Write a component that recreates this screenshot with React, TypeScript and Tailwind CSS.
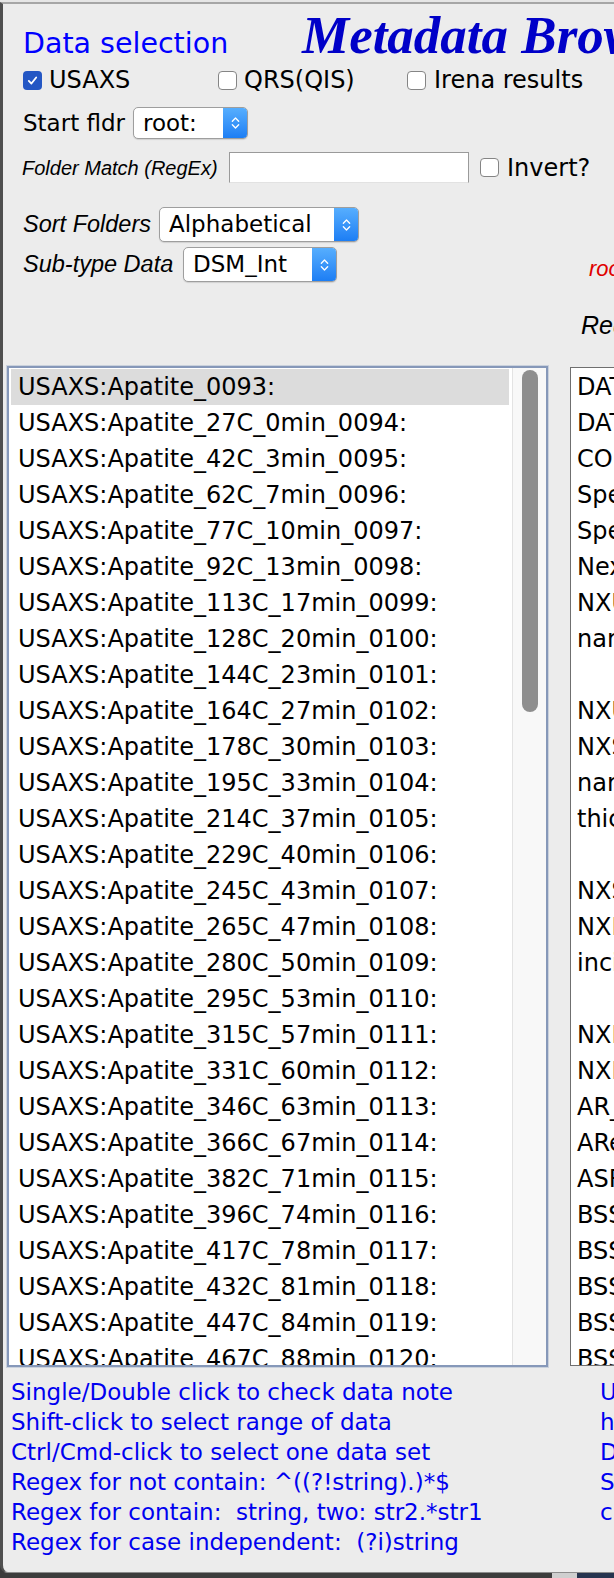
import clsx from "clsx";

const samples = [
  "USAXS:Apatite_0093:",
  "USAXS:Apatite_27C_0min_0094:",
  "USAXS:Apatite_42C_3min_0095:",
  "USAXS:Apatite_62C_7min_0096:",
  "USAXS:Apatite_77C_10min_0097:",
  "USAXS:Apatite_92C_13min_0098:",
  "USAXS:Apatite_113C_17min_0099:",
  "USAXS:Apatite_128C_20min_0100:",
  "USAXS:Apatite_144C_23min_0101:",
  "USAXS:Apatite_164C_27min_0102:",
  "USAXS:Apatite_178C_30min_0103:",
  "USAXS:Apatite_195C_33min_0104:",
  "USAXS:Apatite_214C_37min_0105:",
  "USAXS:Apatite_229C_40min_0106:",
  "USAXS:Apatite_245C_43min_0107:",
  "USAXS:Apatite_265C_47min_0108:",
  "USAXS:Apatite_280C_50min_0109:",
  "USAXS:Apatite_295C_53min_0110:",
  "USAXS:Apatite_315C_57min_0111:",
  "USAXS:Apatite_331C_60min_0112:",
  "USAXS:Apatite_346C_63min_0113:",
  "USAXS:Apatite_366C_67min_0114:",
  "USAXS:Apatite_382C_71min_0115:",
  "USAXS:Apatite_396C_74min_0116:",
  "USAXS:Apatite_417C_78min_0117:",
  "USAXS:Apatite_432C_81min_0118:",
  "USAXS:Apatite_447C_84min_0119:",
  "USAXS:Apatite_467C_88min_0120:",
];

// right panel is cut by the window edge, only the first letters show
const notes = [
  "DATAFILE",
  "DATE",
  "COMMENT",
  "SpecFile",
  "SpecComment",
  "NexusFile",
  "NXUser",
  "name",
  "",
  "NXUser",
  "NXSample",
  "name",
  "thickness",
  "",
  "NXSample",
  "NXInstrument",
  "incident",
  "",
  "NXInstrument",
  "NXMonitor",
  "AR_start",
  "ARenc",
  "ASRP0",
  "BSSAXS",
  "BSSAXS",
  "BSSAXS",
  "BSSAXS",
  "BSSAXS",
];

const help = [
  "Single/Double click to check data note",
  "Shift-click to select range of data",
  "Ctrl/Cmd-click to select one data set",
  "Regex for not contain: ^((?!string).)*$",
  "Regex for contain:  string, two: str2.*str1",
  "Regex for case independent:  (?i)string",
];

const helpRight = ["Use", "hold", "Double", "Select", "click"];

function Check({ checked }: { checked?: boolean }) {
  if (checked) {
    return (
      <span className="flex h-[19px] w-[19px] shrink-0 items-center justify-center rounded-[4px] bg-[#2457c4]">
        <svg viewBox="0 0 12 12" className="h-[13px] w-[13px]">
          <path
            d="M2.6 6.4 L5 8.8 L9.4 3.2"
            fill="none"
            stroke="white"
            strokeWidth="1.7"
            strokeLinecap="round"
            strokeLinejoin="round"
          />
        </svg>
      </span>
    );
  }
  return <span className="h-[19px] w-[19px] shrink-0 rounded-[4px] border border-[#858585] bg-white" />;
}

function Popup({ label, className }: { label: string; className: string }) {
  return (
    <div
      className={clsx(
        "flex items-stretch rounded-[5px] border border-[#9e9e9e] bg-white shadow-[0_1px_1px_rgba(0,0,0,0.12)]",
        className
      )}
    >
      <span className="flex flex-1 items-center pl-[9px] text-[23px] leading-none text-black">{label}</span>
      <span className="flex w-[24px] items-center justify-center rounded-r-[4px] bg-linear-to-b from-[#56aefe] to-[#1c7ef4]">
        <svg viewBox="0 0 12 20" className="h-[18px] w-[11px]">
          <path d="M2.5 8 L6 4.5 L9.5 8" fill="none" stroke="white" strokeWidth="1.5" strokeLinecap="round" strokeLinejoin="round" />
          <path d="M2.5 12 L6 15.5 L9.5 12" fill="none" stroke="white" strokeWidth="1.5" strokeLinecap="round" strokeLinejoin="round" />
        </svg>
      </span>
    </div>
  );
}

export default function App() {
  return (
    <div className="flex h-[1578px] w-[614px] flex-col overflow-hidden bg-[#3c3c3c] font-['DejaVu_Sans',sans-serif]">
      <div className="h-[2px] shrink-0 bg-[#e6e6e6]" />
      <div className="flex min-h-0 flex-1 flex-col rounded-bl-[8px] border-t-2 border-b border-l-[3px] border-t-[#a6a6a6] border-b-[#8c8c8c] border-l-[#4f4f4f] bg-[#ececec]">
        {/* title */}
        <div className="mt-[3px] flex h-[58px] items-baseline whitespace-nowrap pl-[20px]">
          <span className="w-[279px] shrink-0 text-[28.5px] leading-[34px] text-[#0000ff]">Data selection</span>
          <span className="font-['Liberation_Serif',serif] text-[53px] leading-[56px] font-bold italic text-[#0000c8]">
            Metadata Browser
          </span>
        </div>

        {/* data types */}
        <div className="flex h-[30px] items-center whitespace-nowrap pl-[20px] text-[24px] text-black">
          <div className="flex w-[195px] shrink-0 items-center gap-[7px]">
            <Check checked />
            <span>USAXS</span>
          </div>
          <div className="flex w-[189px] shrink-0 items-center gap-[7px]">
            <Check />
            <span>QRS(QIS)</span>
          </div>
          <div className="flex shrink-0 items-center gap-[8px]">
            <Check />
            <span>Irena results</span>
          </div>
        </div>

        {/* start folder */}
        <div className="mt-[12px] flex h-[32px] items-center pl-[20px] text-[23px] text-black">
          <span className="w-[110px] shrink-0">Start fldr</span>
          <Popup label="root:" className="h-[32px] w-[115px]" />
        </div>

        {/* folder match */}
        <div className="mt-[13px] flex h-[31px] items-center whitespace-nowrap pl-[19px]">
          <span className="w-[207px] shrink-0 font-['Liberation_Sans',sans-serif] text-[20px] italic text-black">
            Folder Match (RegEx)
          </span>
          <div className="h-[31px] w-[240px] shrink-0 border border-[#9a9a9a] border-b-[#e2e2e2] bg-white" />
          <div className="ml-[11px] flex items-center gap-[8px] text-[24px] text-black">
            <Check />
            <span>Invert?</span>
          </div>
        </div>

        {/* sort */}
        <div className="mt-[24px] flex h-[35px] items-center whitespace-nowrap pl-[20px] font-['Liberation_Sans',sans-serif] text-[23.5px] italic text-black">
          <span className="w-[136px] shrink-0">Sort Folders</span>
          <div className="not-italic font-['DejaVu_Sans',sans-serif]">
            <Popup label="Alphabetical" className="h-[35px] w-[200px]" />
          </div>
        </div>

        {/* sub-type */}
        <div className="mt-[5px] flex h-[35px] items-center whitespace-nowrap pl-[20px] font-['Liberation_Sans',sans-serif] text-[23.5px] italic text-black">
          <span className="w-[160px] shrink-0">Sub-type Data</span>
          <div className="not-italic font-['DejaVu_Sans',sans-serif]">
            <Popup label="DSM_Int" className="h-[35px] w-[154px]" />
          </div>
          <span className="mb-[1px] ml-[252px] self-end text-[22px] leading-[24px] text-[#e00000]">root:USAXS:</span>
        </div>

        {/* panel caption */}
        <div className="mt-[29px] flex h-[30px] items-center whitespace-nowrap pl-[578px] font-['Liberation_Sans',sans-serif] text-[25px] italic text-black">
          Reduced
        </div>

        {/* lists */}
        <div className="mt-[25px] flex h-[1001px] shrink-0 items-start pl-[4px]">
          <div className="flex h-[1001px] w-[541px] shrink-0 overflow-hidden border-2 border-[#8698b9] bg-white shadow-[0_0_0_1px_#cad1dc]">
            <div className="min-w-0 flex-1 overflow-hidden pt-[1px] pr-[3px] pl-[2px]">
              {samples.map((s, i) => (
                <div
                  key={s}
                  className={clsx(
                    "h-[36px] whitespace-nowrap pl-[7px] text-[24px] leading-[36px] text-black",
                    i === 0 && "bg-[#dcdcdc]"
                  )}
                >
                  {s}
                </div>
              ))}
            </div>
            <div className="flex w-[34px] shrink-0 justify-center border-l border-[#e3e3e3] bg-[#f8f8f8]">
              <div className="mt-[2px] h-[342px] w-[16px] rounded-full bg-[#8e8e8e]" />
            </div>
          </div>
          <div className="mt-[1px] ml-[22px] h-[999px] w-[100px] shrink-0 overflow-hidden border border-[#6f6f6f] bg-white pt-[1px] pl-[6px]">
            {notes.map((n, i) => (
              <div key={i} className="h-[36px] whitespace-nowrap text-[24px] leading-[36px] text-black">
                {n}
              </div>
            ))}
          </div>
        </div>

        {/* help */}
        <div className="mt-[10px] flex whitespace-pre text-[23px] leading-[30px] text-[#0000f0]">
          <div className="w-[597px] shrink-0 pl-[8px]">
            {help.map((h) => (
              <div key={h}>{h}</div>
            ))}
          </div>
          <div className="shrink-0">
            {helpRight.map((h) => (
              <div key={h}>{h}</div>
            ))}
          </div>
        </div>
      </div>
      <div className="flex h-[5px] shrink-0">
        <div className="w-[552px] bg-[#3c3c3c]" />
        <div className="w-[25px] bg-[#cfcfcf]" />
        <div className="flex-1 bg-[#27344f]" />
      </div>
    </div>
  );
}
